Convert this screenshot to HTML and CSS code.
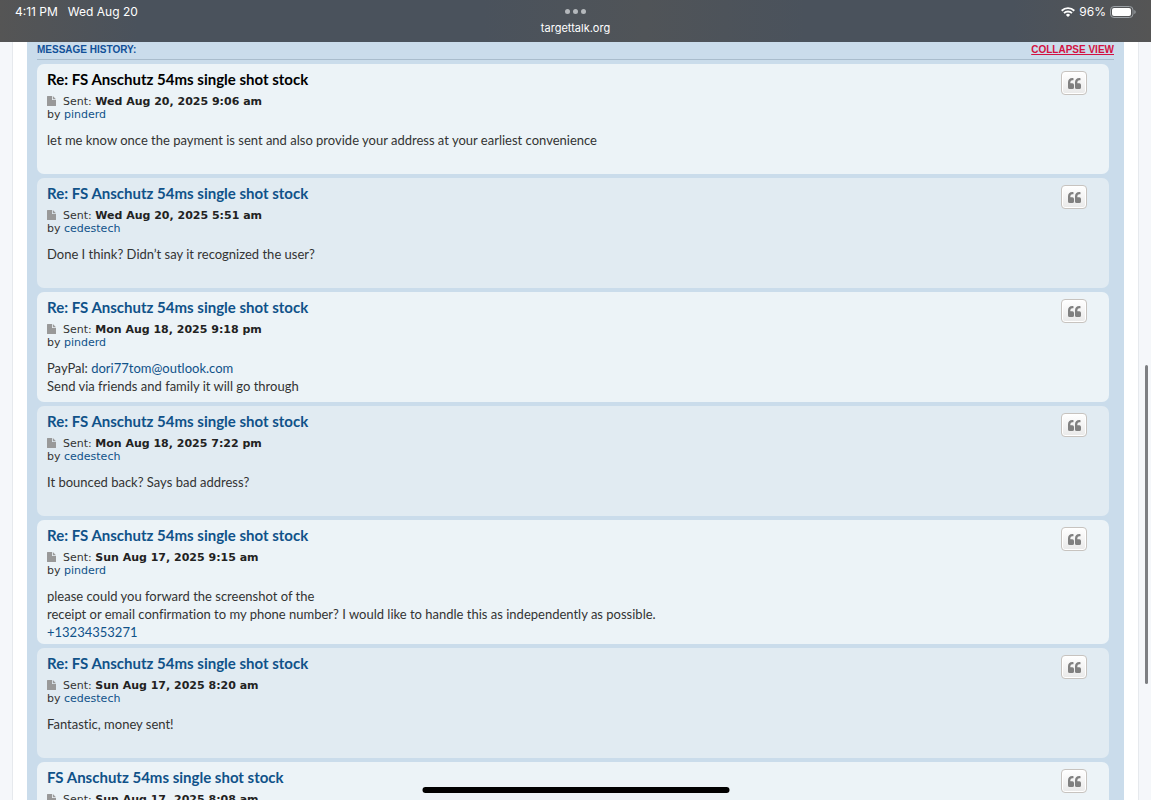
FILE: index.html
```
<!DOCTYPE html>
<html lang="en">
<head>
  <meta charset="UTF-8">
  <meta name="viewport" content="width=device-width, initial-scale=1.0">
  <title>targettalk.org</title>
  <link rel="stylesheet" href="styles.css">
</head>
<body>
  <svg class="defs" width="0" height="0" aria-hidden="true">
    <symbol id="file" viewBox="0 0 9 10">
      <path d="M0 .5Q0 0 .5 0H5v3.500q0 .5.500.5H9v5.500q0 .5-.5.500H.5Q0 10 0 9.500z"/>
      <path d="M5.800 0 9 3.200H5.800z"/>
    </symbol>
    <symbol id="quote" viewBox="0 0 13 11">
      <path d="M6 6.900v2.500Q6 11 4.400 11H1.600Q0 11 0 9.400V4.500Q0 0 4.400 0H5q.5 0 .5.500v1.200q0 .5-.5.500h-.6Q2.300 2.200 2.300 4.400v.3q0 .6.600.6h1.500Q6 5.300 6 6.900z"/>
      <path d="M13 6.900v2.500Q13 11 11.400 11H8.600Q7 11 7 9.400V4.500Q7 0 11.400 0h.6q.5 0 .5.500v1.200q0 .5-.5.500h-.6Q9.300 2.200 9.300 4.400v.3q0 .6.600.6h1.500Q13 5.300 13 6.900z"/>
    </symbol>
  </svg>

  <header class="statusbar">
    <div class="clock"><span>4:11 PM</span><span>Wed Aug 20</span></div>
    <div class="address">
      <svg width="21" height="5" viewBox="0 0 21 5" fill="#b4b8bc"><circle cx="2.500" cy="2.500" r="2.500"/><circle cx="10.500" cy="2.500" r="2.500"/><circle cx="18.500" cy="2.500" r="2.500"/></svg>
      <span>targettalk.org</span>
    </div>
    <div class="power">
      <svg width="14" height="10" viewBox="0 0 14 10" fill="none" stroke="#fff" stroke-width="1.900"><path d="M.7 3.700a9 9 0 0 1 12.600 0M3 6.100a5.700 5.700 0 0 1 8 0"/><path d="M7 10 4.900 7.900a3 3 0 0 1 4.200 0z" fill="#fff" stroke="none"/></svg>
      <span>96%</span>
      <svg width="26" height="12" viewBox="0 0 26 12"><rect x=".5" y=".5" width="22.500" height="11" rx="3.500" fill="none" stroke="#9a9fa4"/><rect x="2" y="2" width="19" height="8" rx="2" fill="#fff"/><path d="M24.300 4v4q1.400-.6 1.400-2t-1.400-2z" fill="#9a9fa4"/></svg>
    </div>
  </header>

  <main class="wrap">
    <div class="panel">
      <h3 class="review-title">
        <span>MESSAGE HISTORY:</span>
        <a href="#review">COLLAPSE VIEW</a>
      </h3>

      <div class="review" id="review">
        <article class="post bg2">
          <div class="postbody">
            <h3 class="current">Re: FS Anschutz 54ms single shot stock</h3>
            <p class="author"><svg class="icon"><use href="#file"/></svg>Sent: <strong>Wed Aug 20, 2025 9:06 am</strong><br>by <a href="#">pinderd</a></p>
            <div class="content">let me know once the payment is sent and also provide your address at your earliest convenience</div>
          </div>
          <button class="quote" type="button" aria-label="Quote"><svg><use href="#quote"/></svg></button>
        </article>

        <article class="post bg1">
          <div class="postbody">
            <h3><a href="#">Re: FS Anschutz 54ms single shot stock</a></h3>
            <p class="author"><svg class="icon"><use href="#file"/></svg>Sent: <strong>Wed Aug 20, 2025 5:51 am</strong><br>by <a href="#">cedestech</a></p>
            <div class="content">Done I think? Didn’t say it recognized the user?</div>
          </div>
          <button class="quote" type="button" aria-label="Quote"><svg><use href="#quote"/></svg></button>
        </article>

        <article class="post bg2">
          <div class="postbody">
            <h3><a href="#">Re: FS Anschutz 54ms single shot stock</a></h3>
            <p class="author"><svg class="icon"><use href="#file"/></svg>Sent: <strong>Mon Aug 18, 2025 9:18 pm</strong><br>by <a href="#">pinderd</a></p>
            <div class="content">PayPal: <a href="mailto:dori77tom@outlook.com">dori77tom@outlook.com</a><br>Send via friends and family it will go through</div>
          </div>
          <button class="quote" type="button" aria-label="Quote"><svg><use href="#quote"/></svg></button>
        </article>

        <article class="post bg1">
          <div class="postbody">
            <h3><a href="#">Re: FS Anschutz 54ms single shot stock</a></h3>
            <p class="author"><svg class="icon"><use href="#file"/></svg>Sent: <strong>Mon Aug 18, 2025 7:22 pm</strong><br>by <a href="#">cedestech</a></p>
            <div class="content">It bounced back? Says bad address?</div>
          </div>
          <button class="quote" type="button" aria-label="Quote"><svg><use href="#quote"/></svg></button>
        </article>

        <article class="post bg2">
          <div class="postbody">
            <h3><a href="#">Re: FS Anschutz 54ms single shot stock</a></h3>
            <p class="author"><svg class="icon"><use href="#file"/></svg>Sent: <strong>Sun Aug 17, 2025 9:15 am</strong><br>by <a href="#">pinderd</a></p>
            <div class="content">please could you forward the screenshot of the<br>receipt or email confirmation to my phone number? I would like to handle this as independently as possible.<br><a href="tel:+13234353271">+13234353271</a></div>
          </div>
          <button class="quote" type="button" aria-label="Quote"><svg><use href="#quote"/></svg></button>
        </article>

        <article class="post bg1">
          <div class="postbody">
            <h3><a href="#">Re: FS Anschutz 54ms single shot stock</a></h3>
            <p class="author"><svg class="icon"><use href="#file"/></svg>Sent: <strong>Sun Aug 17, 2025 8:20 am</strong><br>by <a href="#">cedestech</a></p>
            <div class="content">Fantastic, money sent!</div>
          </div>
          <button class="quote" type="button" aria-label="Quote"><svg><use href="#quote"/></svg></button>
        </article>

        <article class="post bg2">
          <div class="postbody">
            <h3><a href="#">FS Anschutz 54ms single shot stock</a></h3>
            <p class="author"><svg class="icon"><use href="#file"/></svg>Sent: <strong>Sun Aug 17, 2025 8:08 am</strong></p>
          </div>
          <button class="quote" type="button" aria-label="Quote"><svg><use href="#quote"/></svg></button>
        </article>
      </div>
    </div>
  </main>

  <div class="scroll-thumb"></div>
  <div class="home-bar"></div>
</body>
</html>
```
FILE: styles.css
```
* {
  box-sizing: border-box;
}

body {
  margin: 0;
  height: 100vh;
  overflow: hidden;
  display: flex;
  flex-direction: column;
  background-color: #f5f7fa;
  color: #333;
  font-family: "Trebuchet MS", Lato, sans-serif;
  font-variant-ligatures: none;
}

a {
  color: #105289;
  text-decoration: none;
}

h3, p {
  margin: 0;
}

.defs {
  position: absolute;
}

/* status bar */
.statusbar {
  flex: none;
  display: grid;
  grid-template-columns: 1fr auto 1fr;
  height: 42px;
  padding: 4px 15px 0;
  background: linear-gradient(90deg, #555555, #4a525c 12%, #4a525c 42%, #505458 56%, #4a525c 70%, #4a525c 88%, #555555);
  color: #fff;
  font: 400 12px/16px Inter, sans-serif;
}

.clock {
  display: flex;
  gap: 10px;
}

.address {
  display: flex;
  flex-direction: column;
  align-items: center;
  gap: 6px;
  padding-top: 5px;
  font-size: 11px;
}

.power {
  display: flex;
  justify-content: flex-end;
  gap: 4px;
  height: 16px;
  align-items: center;
}

/* page */
.wrap {
  flex: 1;
  min-height: 0;
  margin: 0 12px;
  padding: 0 14px;
  overflow: hidden;
  background-color: #fff;
  border: 1px solid #e6e9ed;
  border-width: 0 1px;
}

.panel {
  padding: 0 10px;
  background-color: #cadceb;
}

.review-title {
  display: flex;
  justify-content: space-between;
  height: 18px;
  border-bottom: 1px solid #a9bccc;
  color: #115098;
  font: bold 10px/15px Arial, "Liberation Sans", sans-serif;
}

.review-title a {
  color: #d31141;
  text-decoration: underline;
}

.review {
  display: flex;
  flex-direction: column;
  gap: 4px;
  padding: 4px 5px 0 0;
}

.post {
  display: flex;
  justify-content: space-between;
  align-items: flex-start;
  min-height: 110px;
  padding: 5px 22px 3px 10px;
  border-radius: 7px;
}

.bg1 {
  background-color: #e1ebf2;
}

.bg2 {
  background-color: #ecf3f7;
}

.postbody h3 {
  color: #105289;
  font-size: 15px;
  font-weight: 700;
  line-height: 20px;
}

.postbody .current {
  color: #000;
}

.author {
  padding-top: 6px;
  font: 11px/13px Verdana, "DejaVu Sans", sans-serif;
}

.author strong {
  color: #222;
}

.icon {
  width: 9px;
  height: 10px;
  margin-right: 7px;
  vertical-align: -1px;
  fill: #999;
}

.content {
  padding-top: 10px;
  font-size: 13px;
  line-height: 18px;
}

.quote {
  flex: none;
  display: flex;
  align-items: center;
  justify-content: center;
  width: 26px;
  height: 24px;
  margin-top: 2px;
  padding: 0;
  border: 1px solid #c7c3bf;
  border-radius: 4px;
  background: linear-gradient(#fff, #e9e9e9);
  box-shadow: inset 0 0 0 1px #fff;
}

.quote svg {
  width: 13px;
  height: 11px;
  fill: #808080;
}

/* overlays */
.scroll-thumb {
  position: fixed;
  top: 365px;
  right: 3px;
  width: 3px;
  height: 319px;
  border-radius: 2px;
  background-color: #7d7f82;
}

.home-bar {
  position: fixed;
  bottom: 7px;
  left: 50%;
  width: 307px;
  height: 6px;
  border-radius: 3px;
  transform: translateX(-50%);
  background-color: #000;
}
```
